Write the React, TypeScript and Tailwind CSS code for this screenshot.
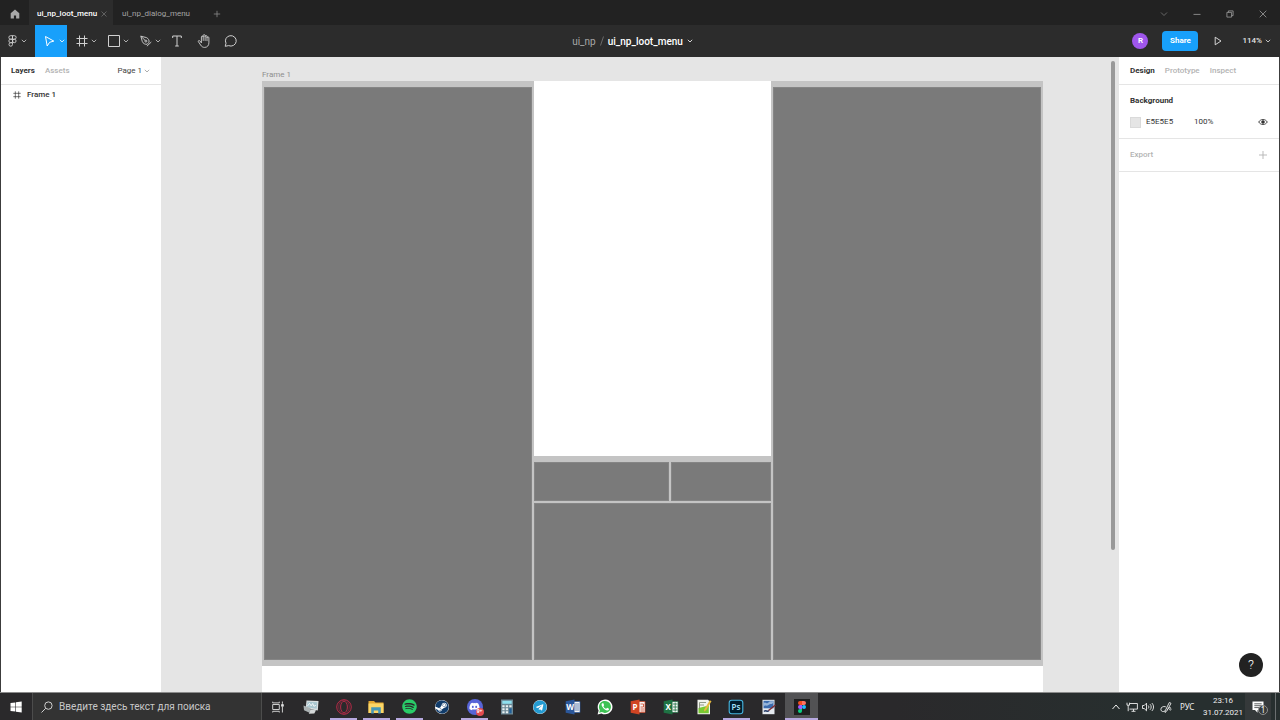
import type { ReactNode } from "react";
import { FaDiscord, FaSpotify, FaSteam, FaTelegram } from "react-icons/fa";

function Chevron({ className = "" }: { className?: string }) {
    return (
        <svg viewBox="0 0 6 4" className={`h-1 w-1.5 shrink-0 ${className}`} fill="none" stroke="currentColor" strokeWidth="0.8">
            <path d="M.8.8 3 3 5.2.8" />
        </svg>
    );
}

function HashIcon({ className }: { className: string }) {
    return (
        <svg viewBox="0 0 12 12" className={className} fill="none" stroke="currentColor">
            <path d="M3.5.5v11M8.5.5v11M.5 3.5h11M.5 8.5h11" />
        </svg>
    );
}

function ToolButton({ label, children, active, menu }: { label: string; children: ReactNode; active?: boolean; menu?: boolean }) {
    return (
        <button
            aria-label={label}
            className={`flex h-full items-center gap-[3px] ${menu ? "w-8 pl-[9px]" : "w-[27px] justify-center"} ${active ? "bg-[#18a0fb] text-white" : "text-[#d0d0d0]"}`}
        >
            {children}
            {menu && <Chevron />}
        </button>
    );
}

function TabBar() {
    return (
        <header className="flex h-[25px] shrink-0 items-stretch bg-[#222222] text-[8px] font-medium">
            <button aria-label="Home" className="flex w-[29px] items-center justify-center pt-0.5 text-[#a8a8a8]">
                <svg viewBox="0 0 10 10" className="h-2.5 w-2.5" fill="currentColor">
                    <path d="M5 .4.7 4.2V9.6H3.9V6.4H6.1V9.6H9.3V4.2Z" />
                </svg>
            </button>
            <div className="flex w-[84px] items-center justify-between bg-[#2c2c2c] pt-0.5 pr-1.5 pl-2 text-white">
                <button>ui_np_loot_menu</button>
                <button aria-label="Close tab" className="text-[#777777]">
                    <svg viewBox="0 0 6 6" className="h-1.5 w-1.5" stroke="currentColor" strokeWidth="0.7">
                        <path d="m.5.5 5 5m0-5-5 5" />
                    </svg>
                </button>
            </div>
            <button className="w-[86px] pt-0.5 font-normal text-[#a4a4a4]">ui_np_dialog_menu</button>
            <button aria-label="New tab" className="ml-3.5 pt-0.5 text-[#8c8c8c]">
                <svg viewBox="0 0 8 8" className="h-2 w-2" stroke="currentColor" strokeWidth="0.8">
                    <path d="M4 .8v6.400M.8 4h6.400" />
                </svg>
            </button>
            <div className="ml-auto flex pt-0.5 text-[#a0a0a0]">
                <button aria-label="Tab list" className="flex w-[33px] items-center justify-center text-[#777777]">
                    <svg viewBox="0 0 8 8" className="h-2 w-2" fill="none" stroke="currentColor" strokeWidth="0.8">
                        <path d="m1 2.5 3 3 3-3" />
                    </svg>
                </button>
                <button aria-label="Minimize" className="flex w-[33px] items-center justify-center">
                    <svg viewBox="0 0 8 8" className="h-2 w-2" stroke="currentColor" strokeWidth="0.8">
                        <path d="M.5 4.4h7" />
                    </svg>
                </button>
                <button aria-label="Restore" className="flex w-[33px] items-center justify-center">
                    <svg viewBox="0 0 8 8" className="h-2 w-2" fill="none" stroke="currentColor" strokeWidth="0.8">
                        <path d="M.9 2.4h4.7v4.7H.9ZM2.4 2.4V.9h4.7v4.7H5.6" />
                    </svg>
                </button>
                <button aria-label="Close" className="flex w-[34px] items-center justify-center">
                    <svg viewBox="0 0 8 8" className="h-2 w-2" stroke="currentColor" strokeWidth="0.8">
                        <path d="m.7.7 6.6 6.6m0-6.6L.7 7.3" />
                    </svg>
                </button>
            </div>
        </header>
    );
}

function Toolbar() {
    return (
        <div className="flex h-8 shrink-0 items-center bg-[#2c2c2c] text-[#e5e5e5]">
            <div className="flex h-full flex-1">
                <button aria-label="Main menu" className="flex w-[35px] items-center gap-1 pl-2 text-[#d0d0d0]">
                    <svg viewBox="0 0 9 12" className="h-3 w-[9px]" fill="none" stroke="currentColor" strokeWidth="0.9">
                        <path d="M4.5.7H2.6a1.75 1.75 0 0 0 0 3.5h1.9ZM4.5.7h1.9a1.75 1.75 0 0 1 0 3.5H4.5ZM4.5 4.2H2.6a1.75 1.75 0 0 0 0 3.5h1.9ZM4.5 7.7H2.6a1.75 1.75 0 1 0 1.9 1.8Z" />
                        <circle cx="6.3" cy="5.95" r="1.75" />
                    </svg>
                    <Chevron />
                </button>
                <ToolButton label="Move" active menu>
                    <svg viewBox="0 0 12 12" className="h-3 w-3" fill="none" stroke="currentColor" strokeLinejoin="round">
                        <path d="m1.5 1.5 8.300 4.600-4.200 1.200-2.400 3.700Z" />
                    </svg>
                </ToolButton>
                <ToolButton label="Frame" menu>
                    <HashIcon className="h-3 w-3" />
                </ToolButton>
                <ToolButton label="Rectangle" menu>
                    <svg viewBox="0 0 12 12" className="h-3 w-3" fill="none" stroke="currentColor">
                        <path d="M.5.5h11v11H.5Z" />
                    </svg>
                </ToolButton>
                <ToolButton label="Pen" menu>
                    <svg viewBox="0 0 12 12" className="h-3 w-3" fill="none" stroke="currentColor" strokeWidth="0.9" strokeLinejoin="round">
                        <path d="M.8 1.200 6.500 2.600C8.600 3.600 9.300 5.500 9 7.200L7.200 9.300C5 9.500 3.100 8.600 2.300 6.500ZM.8 1.200 5.200 5.500M6.900 11.200 11.300 7" />
                        <circle cx="5.9" cy="6.100" r="1" />
                    </svg>
                </ToolButton>
                <ToolButton label="Text">
                    <svg viewBox="0 0 10 12" className="h-3 w-2.5" fill="none" stroke="currentColor">
                        <path d="M.7 3V1h8.600v2M5 1v10M3.200 11h3.600" />
                    </svg>
                </ToolButton>
                <ToolButton label="Hand">
                    <svg viewBox="0 0 14 14" className="h-3.5 w-3.5" fill="none" stroke="currentColor" strokeWidth="0.9" strokeLinejoin="round" strokeLinecap="round">
                        <path d="M4.400 8.500V3a.9.9 0 0 1 1.800 0V1.600a.9.9 0 0 1 1.900 0v.9a.9.9 0 0 1 1.900 0v1.300a.9.9 0 0 1 1.900 0v5c0 2.700-1.700 4.600-4.200 4.600-2 0-3.200-.9-4-2.300L1.300 7.600c-.4-.8.7-1.600 1.400-.9ZM6.200 3v3.500M8.100 2.500v4M10 3.800v2.900" />
                    </svg>
                </ToolButton>
                <ToolButton label="Comment">
                    <svg viewBox="0 0 14 14" className="h-3.5 w-3.5" fill="none" stroke="currentColor" strokeLinejoin="round">
                        <path d="M1.200 12.300 2 9.200A5.400 5.200 0 1 1 4.600 11.600Z" />
                    </svg>
                </ToolButton>
            </div>
            <div className="flex items-center gap-[3px] pr-1.5 text-[10px]">
                <button className="text-[#a8a8a8]">ui_np</button>
                <svg viewBox="0 0 6 10" className="h-2.5 w-1.5" stroke="#777777" strokeWidth="0.8">
                    <path d="M1.500 9.500 4.500.5" />
                </svg>
                <button className="flex items-center gap-1 font-medium text-white">
                    ui_np_loot_menu
                    <Chevron />
                </button>
            </div>
            <div className="flex flex-1 items-center justify-end pr-[9px]">
                <span className="mr-3.5 flex h-4 w-4 items-center justify-center rounded-full bg-[#9f56ec] text-[8px] font-semibold text-white">R</span>
                <button className="mr-4 h-5 w-9 rounded-sm bg-[#18a0fb] text-[8px] font-bold text-white">Share</button>
                <button aria-label="Present" className="mr-5">
                    <svg viewBox="0 0 8 10" className="h-2.5 w-2" fill="none" stroke="currentColor" strokeWidth="0.9" strokeLinejoin="round">
                        <path d="M1.200 1.200 7 5 1.200 8.800Z" />
                    </svg>
                </button>
                <button className="flex items-center gap-[3px] text-[8px] font-medium">
                    114%
                    <Chevron />
                </button>
            </div>
        </div>
    );
}

function LayersPanel() {
    return (
        <aside className="w-40 shrink-0 bg-white text-[8px] text-[#333333]">
            <div className="flex h-7 items-center border-b border-[#e5e5e5] pr-[11px] pl-2.5">
                <button className="mr-2.5 font-bold">Layers</button>
                <button className="font-medium text-[#b3b3b3]">Assets</button>
                <button className="ml-auto flex items-center gap-0.5 text-[#444444]">
                    Page 1
                    <Chevron className="text-[#999999]" />
                </button>
            </div>
            <button className="flex h-5 w-full items-center gap-1.5 pl-3 font-medium">
                <HashIcon className="h-2 w-2" />
                Frame 1
            </button>
        </aside>
    );
}

function Canvas() {
    return (
        <main className="relative flex min-w-0 flex-1 flex-col bg-[#e5e5e5] pt-3 pr-[76px] pl-[101px]">
            <div className="h-3 text-[8px] leading-3 text-[#8f8f8f]">Frame 1</div>
            <div className="flex flex-1 flex-col bg-white pb-[26px]">
                <div className="grid flex-1 grid-cols-[272fr_237fr_272fr] bg-[#c4c4c4] pb-1.5">
                    <div className="px-0.5 pt-1.5">
                        <div className="h-full border border-[#858585] bg-[#7a7a7a]" />
                    </div>
                    <div className="grid grid-rows-[375fr_6px_39fr_2px_157fr]">
                        <div className="bg-white" />
                        <div className="row-start-3 grid grid-cols-[135fr_100fr] gap-0.5">
                            <div className="border border-[#858585] bg-[#7a7a7a]" />
                            <div className="border border-[#858585] bg-[#7a7a7a]" />
                        </div>
                        <div className="row-start-5 border border-[#858585] bg-[#7a7a7a]" />
                    </div>
                    <div className="px-0.5 pt-1.5">
                        <div className="h-full border border-[#858585] bg-[#7a7a7a]" />
                    </div>
                </div>
            </div>
            {/* Scroll thumb */}
            <div className="absolute top-1 right-1 h-[77%] w-1 rounded-full bg-[#999999]" />
        </main>
    );
}

function DesignPanel() {
    return (
        <aside className="relative w-40 shrink-0 bg-white text-[8px] text-[#333333]">
            <div className="flex h-7 items-center gap-2.5 border-b border-[#e5e5e5] px-[11px]">
                <button className="font-bold">Design</button>
                <button className="font-medium text-[#b3b3b3]">Prototype</button>
                <button className="font-medium text-[#b3b3b3]">Inspect</button>
            </div>
            <section className="h-[54px] border-b border-[#e5e5e5] px-[11px] pt-2.5">
                <h2 className="leading-3 font-bold">Background</h2>
                <div className="mt-[7px] flex h-4 items-center">
                    <span className="h-[11px] w-[11px] border border-[#dadada] bg-[#e5e5e5]" />
                    <input aria-label="Background color" defaultValue="E5E5E5" className="ml-1 w-11 p-0 pl-px" />
                    <input aria-label="Opacity" defaultValue="100%" className="ml-1 w-8 p-0 pl-px" />
                    <button aria-label="Toggle visibility" className="ml-auto">
                        <svg viewBox="0 0 10 8" className="h-2 w-2.5" fill="none" stroke="currentColor" strokeWidth="0.9">
                            <path d="M.7 4C2.600.700 7.400.700 9.300 4 7.400 7.300 2.600 7.300.7 4Z" />
                            <circle cx="5" cy="4" r="1.300" fill="currentColor" />
                        </svg>
                    </button>
                </div>
            </section>
            <section className="flex h-[33px] items-center justify-between border-b border-[#e5e5e5] px-3 pl-[11px] text-[#b3b3b3]">
                <h2 className="font-medium">Export</h2>
                <button aria-label="Add export">
                    <svg viewBox="0 0 8 8" className="h-2 w-2" stroke="currentColor" strokeWidth="0.9">
                        <path d="M4 0v8M0 4h8" />
                    </svg>
                </button>
            </section>
            <button aria-label="Help" className="absolute right-4 bottom-[15px] flex h-6 w-6 items-center justify-center rounded-full bg-[#222222] text-[13px] font-light text-white">
                ?
            </button>
        </aside>
    );
}

function OfficeIcon({ letter, color, children }: { letter: string; color: string; children: ReactNode }) {
    return (
        <svg viewBox="0 0 16 16" className="h-4 w-4">
            <path d="M8 2.500h7v11H8Z" fill="#f5f5f5" stroke={color} strokeWidth="0.7" />
            {children}
            <path d="M.7 2.200 9.500.6v14.800L.7 13.800Z" fill={color} />
            <text x="5.100" y="11" fontSize="8" fontWeight="700" textAnchor="middle" fill="#fff">
                {letter}
            </text>
        </svg>
    );
}

const apps: { name: string; icon: ReactNode; open?: boolean; active?: boolean }[] = [
    {
        name: "Task View",
        icon: (
            <svg viewBox="0 0 12 12" className="h-3 w-3" fill="none" stroke="#e0e0e0" strokeWidth="0.9">
                <path d="M.7 3.500h6.600v5H.7ZM.7.700v1.200h6.600V.7M.7 11.500v-1.200h6.600v1.200M10.400.5v2.300M10.400 6v5.500" />
                <path d="M9.600 3.500h1.700v1.800H9.600Z" fill="#e0e0e0" />
            </svg>
        ),
    },
    {
        name: "Monitor",
        icon: (
            <svg viewBox="0 0 16 16" className="h-4 w-4">
                <path d="M3.500 1.500 15.500 2 14.800 11.500 2.700 9.500Z" fill="#d9dfe0" />
                <path d="M4.500 2.800 14.200 3.200 13.700 9.800 3.900 8.300Z" fill="#a9c6cf" />
                <path d="m4.500 7 2-2.700 1.600 2.500L9.700 4.500l1.200 2.800 2-1" fill="none" stroke="#fff" strokeWidth="0.8" />
                <path d="m.5 6.500 7.200 2.700-1.200 4.600-5.500-2.500Z" fill="#aab1b2" />
                <path d="m7.500 10.500 5.500.8-1.700 3.200-5.500.2Z" fill="#d4d8d8" />
            </svg>
        ),
    },
    {
        name: "Opera",
        open: true,
        icon: (
            <svg viewBox="0 0 16 16" className="h-4 w-4" fill="none" stroke="#b52a48">
                <circle cx="8" cy="8" r="7.300" />
                <ellipse cx="8" cy="8" rx="3.400" ry="5.800" />
                <ellipse cx="8" cy="8" rx="5.300" ry="7" strokeWidth="0.5" />
            </svg>
        ),
    },
    {
        name: "Explorer",
        open: true,
        icon: (
            <svg viewBox="0 0 16 16" className="h-4 w-4">
                <path d="M.5 2h5.500l1.500 1.500h8V14H.5Z" fill="#e5a932" />
                <path d="M.5 4.500h15V14H.5Z" fill="#fbd667" />
                <path d="M3.200 14.500V8.300h9.600v6.200h-2.600v-3H5.800v3Z" fill="#4598b8" />
            </svg>
        ),
    },
    { name: "Spotify", open: true, icon: <FaSpotify className="h-[15px] w-[15px] text-[#29cc68]" /> },
    {
        name: "Steam",
        icon: <FaSteam className="h-3.5 w-3.5 rounded-full bg-white text-[#113c6b]" />,
    },
    {
        name: "Discord",
        open: true,
        icon: (
            <span className="relative flex h-4 w-4 items-center justify-center rounded-full bg-[#5865d8] text-white">
                <FaDiscord className="h-[11px] w-[11px]" />
                <span className="absolute -right-px -bottom-px flex h-2 w-2 items-center justify-center rounded-full bg-[#e44b50] text-[5px] font-bold">9+</span>
            </span>
        ),
    },
    {
        name: "Calculator",
        icon: (
            <svg viewBox="0 0 14 16" className="h-4 w-3.5">
                <path d="M1 .5h12v15H1Z" fill="#6b8794" />
                <path d="M2.300 1.800h9.400v3H2.300Z" fill="#8fe0ef" />
                <path d="M2.300 6.300h2.300v2H2.300ZM5.800 6.300h2.300v2H5.800ZM9.300 6.300h2.300v2H9.300ZM2.300 9.300h2.300v2H2.300ZM5.800 9.300h2.300v2H5.800ZM2.300 12.300h2.300v2H2.300ZM5.800 12.300h2.300v2H5.800Z" fill="#e8f0f2" />
                <path d="M9.300 9.300h2.300v5H9.300Z" fill="#215f99" />
            </svg>
        ),
    },
    { name: "Telegram", icon: <FaTelegram className="h-3.5 w-3.5 rounded-full bg-white text-[#249bd2]" /> },
    {
        name: "Word",
        icon: (
            <OfficeIcon letter="W" color="#2b579a">
                <path d="M10 5h4M10 7h4M10 9h4M10 11h4" stroke="#2b579a" strokeWidth="0.7" />
            </OfficeIcon>
        ),
    },
    {
        name: "WhatsApp",
        icon: (
            <svg viewBox="0 0 16 16" className="h-4 w-4">
                <path d="M.6 15.400 1.600 11.500A7.400 7.400 0 1 1 4.500 14.400Z" fill="#fff" />
                <path d="M2.200 13.800 2.900 11.200A6 6 0 1 1 4.900 13.100Z" fill="#3dc254" />
                <path d="M5.300 4.200c-1 .6-1 2 .2 3.800 1.400 2.200 3.400 3.600 4.900 3.500 1-.1 1.700-.8 1.600-1.700l-1.900-1-.9 1c-1.200-.4-2.200-1.300-2.800-2.600l.7-.9-.7-2Z" fill="#fff" />
            </svg>
        ),
    },
    {
        name: "PowerPoint",
        icon: (
            <OfficeIcon letter="P" color="#d04423">
                <path d="M10.500 5h3v3h-3M10.500 10h3.500M10.500 12h3.500" fill="none" stroke="#d04423" strokeWidth="0.8" />
            </OfficeIcon>
        ),
    },
    {
        name: "Excel",
        icon: (
            <OfficeIcon letter="X" color="#1f7244">
                <path d="M10 5h4.500M10 8h4.500M10 11h4.500M12.200 3.500v9" stroke="#1f7244" strokeWidth="0.8" />
            </OfficeIcon>
        ),
    },
    {
        name: "Notepad++",
        icon: (
            <svg viewBox="0 0 16 16" className="h-4 w-4">
                <path d="M1.500.8h10.500l2 2v12.500H1.500Z" fill="#f2f4ee" />
                <path d="M2.500 9 12.800 6.500v7.800H2.500Z" fill="#78c932" />
                <path d="M3.500 3.500h6.500M3.500 6h4.500M3.500 3.500v6" fill="none" stroke="#7a8470" strokeWidth="0.8" />
                <path d="m8.300 10.200 5.500-9 1.700 1-5.300 9-2.200 1.300Z" fill="#e7b93e" />
            </svg>
        ),
    },
    {
        name: "Photoshop",
        open: true,
        icon: (
            <svg viewBox="0 0 16 16" className="h-4 w-4">
                <rect x="1.200" y="1.200" width="13.600" height="13.600" rx="2.500" fill="#001d2e" stroke="#46b6e0" strokeWidth="1.100" />
                <text x="8" y="11" fontSize="8" fontWeight="600" textAnchor="middle" fill="#a5e3fa">
                    Ps
                </text>
            </svg>
        ),
    },
    {
        name: "Image editor",
        icon: (
            <svg viewBox="0 0 16 16" className="h-4 w-4">
                <path d="M1.500.8h12v14.400h-12Z" fill="#e4e9ef" />
                <path d="M2.500 1.800h10v7.500h-10Z" fill="#3c6cae" />
                <path d="M2.500 4.500c2-3 3 1.500 5-1s3 0 5-2v2.300c-2 2-3 .5-5 2.200s-3-.5-5 1.500Z" fill="#98b5d9" />
                <path d="M3 12.500c2-2 3 1 5-1" fill="none" stroke="#263b66" strokeWidth="1.500" />
                <path d="m7.500 11.500 7-5.500" stroke="#7f2f36" strokeWidth="1.500" />
            </svg>
        ),
    },
    {
        name: "Figma",
        open: true,
        active: true,
        icon: (
            <span className="flex h-4 w-4 items-center justify-center bg-[#1e1e1e]">
                <svg viewBox="0 0 8 12" className="h-3 w-2">
                    <path d="M4 0H2a2 2 0 0 0 0 4h2Z" fill="#f24e1e" />
                    <path d="M4 0h2a2 2 0 0 1 0 4H4Z" fill="#ff7262" />
                    <path d="M4 4H2a2 2 0 0 0 0 4h2Z" fill="#a259ff" />
                    <circle cx="6" cy="6" r="2" fill="#1abcfe" />
                    <path d="M4 8H2a2 2 0 1 0 2 2Z" fill="#0acf83" />
                </svg>
            </span>
        ),
    },
];

function Taskbar() {
    return (
        <footer className="flex h-7 shrink-0 items-stretch border-t border-[#8b8b8b] bg-linear-to-r from-[#2a292b] from-70% to-[#272f2f] to-90% font-['Noto_Sans','Open_Sans',sans-serif] text-white">
            <button aria-label="Start" className="flex w-8 items-center justify-center">
                <svg viewBox="0 0 12 12" className="h-3 w-3" fill="#fff">
                    <path d="M.5 2.100 5.400 1.400V5.700H.5ZM6 1.300 11.700.500V5.700H6ZM.5 6.300H5.400V10.600L.5 9.900ZM6 6.300h5.700V11.500L6 10.700Z" />
                </svg>
            </button>
            <label className="flex w-[230px] items-center gap-1.5 border-x border-[#4c4c4c] bg-[#333333] pl-2 text-[#d0d0d0]">
                <svg viewBox="0 0 12 12" className="h-3 w-3 shrink-0" fill="none" stroke="currentColor">
                    <circle cx="7.400" cy="4.600" r="3.700" />
                    <path d="M4.700 7.300.5 11.500" />
                </svg>
                <input
                    aria-label="Поиск"
                    placeholder="Введите здесь текст для поиска"
                    className="w-full min-w-0 bg-transparent font-[Roboto,sans-serif] text-[10px] placeholder:text-[#c8c8c8] focus:outline-none"
                />
            </label>
            <nav className="grid w-[556px] grid-cols-17">
                {apps.map((app) => (
                    <button
                        key={app.name}
                        aria-label={app.name}
                        className={`relative flex items-center justify-center ${app.active ? "bg-[#525254]" : ""}`}
                    >
                        {app.icon}
                        {app.open && <span className={`absolute bottom-0 h-0.5 bg-[#b7a9df] ${app.active ? "inset-x-0" : "inset-x-[3px]"}`} />}
                    </button>
                ))}
            </nav>
            <div className="ml-auto flex items-center text-[#eeeeee]">
                <svg viewBox="0 0 8 6" className="mr-1.5 h-1.5 w-2" fill="none" stroke="currentColor">
                    <path d="m.5 5 3.500-4 3.500 4" />
                </svg>
                <svg viewBox="0 0 12 10" className="mr-1 h-2.5 w-3" fill="none" stroke="currentColor" strokeWidth="0.9">
                    <path d="M4 1.500h7.400v5.600H3.500M5.500 9.300h4M7.500 7.100v2.200M1 .7v2.500h2.500V.7M2.200 3.200v6" />
                </svg>
                <svg viewBox="0 0 12 10" className="mr-1.5 h-2.5 w-3" fill="none" stroke="currentColor" strokeWidth="0.9">
                    <path d="M.5 3.500h1.700L4.500 1.200v7.600L2.200 6.500H.5ZM6.200 3.500c.8.900.8 2.100 0 3M8 2.200c1.600 1.600 1.600 4 0 5.600M9.800 1c2.300 2.300 2.300 5.700 0 8" />
                </svg>
                <svg viewBox="0 0 12 12" className="mr-2 h-3 w-3" fill="none" stroke="currentColor" strokeWidth="0.9" strokeLinejoin="round">
                    <path d="M5.200 9.800 9.300 1.500l1.700.8L6.800 10l-1.700 1.500ZM5.800 5.800C3 4.800.8 6.300.9 8.500c.1 2.300 2.600 2.600 4.300 1.300M7.600 8.400C9 6.500 10.200 6 10.400 6.700c.2.800-1.200 1.900-.6 2.300.5.300 1-.2 1.700-.8" />
                </svg>
                <span className="w-5 text-[8px]">РУС</span>
                <div className="ml-px w-11 text-center font-[Roboto,sans-serif] text-[8px] leading-3">
                    <div>23:16</div>
                    <div>31.07.2021</div>
                </div>
                <button aria-label="Notifications" className="flex h-full w-[26px] items-center justify-center bg-[#35393a]">
                    <span className="relative">
                        <svg viewBox="0 0 12 12" className="h-3 w-3">
                            <path d="M.5.500h11v8.500H5.500v2.700L3 9H.5Z" fill="#fff" />
                            <path d="M2.300 2.800h7.400M2.300 4.700h7.400M2.300 6.600h7.400" stroke="#35393a" strokeWidth="0.8" />
                        </svg>
                        <span className="absolute top-1 left-1.5 flex h-2.5 w-2.5 items-center justify-center rounded-full border border-[#8f8f8f] bg-[#35393a] text-[8px] text-white">1</span>
                    </span>
                </button>
                <span className="mx-1 h-full w-px bg-[#6b6f70]" />
            </div>
        </footer>
    );
}

export default function App() {
    return (
        <div className="flex h-screen flex-col overflow-hidden bg-[#222222] font-[Roboto,Inter,sans-serif]">
            <TabBar />
            <Toolbar />
            <div className="flex min-h-0 flex-1 border-x border-[#3c3c3c]">
                <LayersPanel />
                <Canvas />
                <DesignPanel />
            </div>
            <Taskbar />
        </div>
    );
}
